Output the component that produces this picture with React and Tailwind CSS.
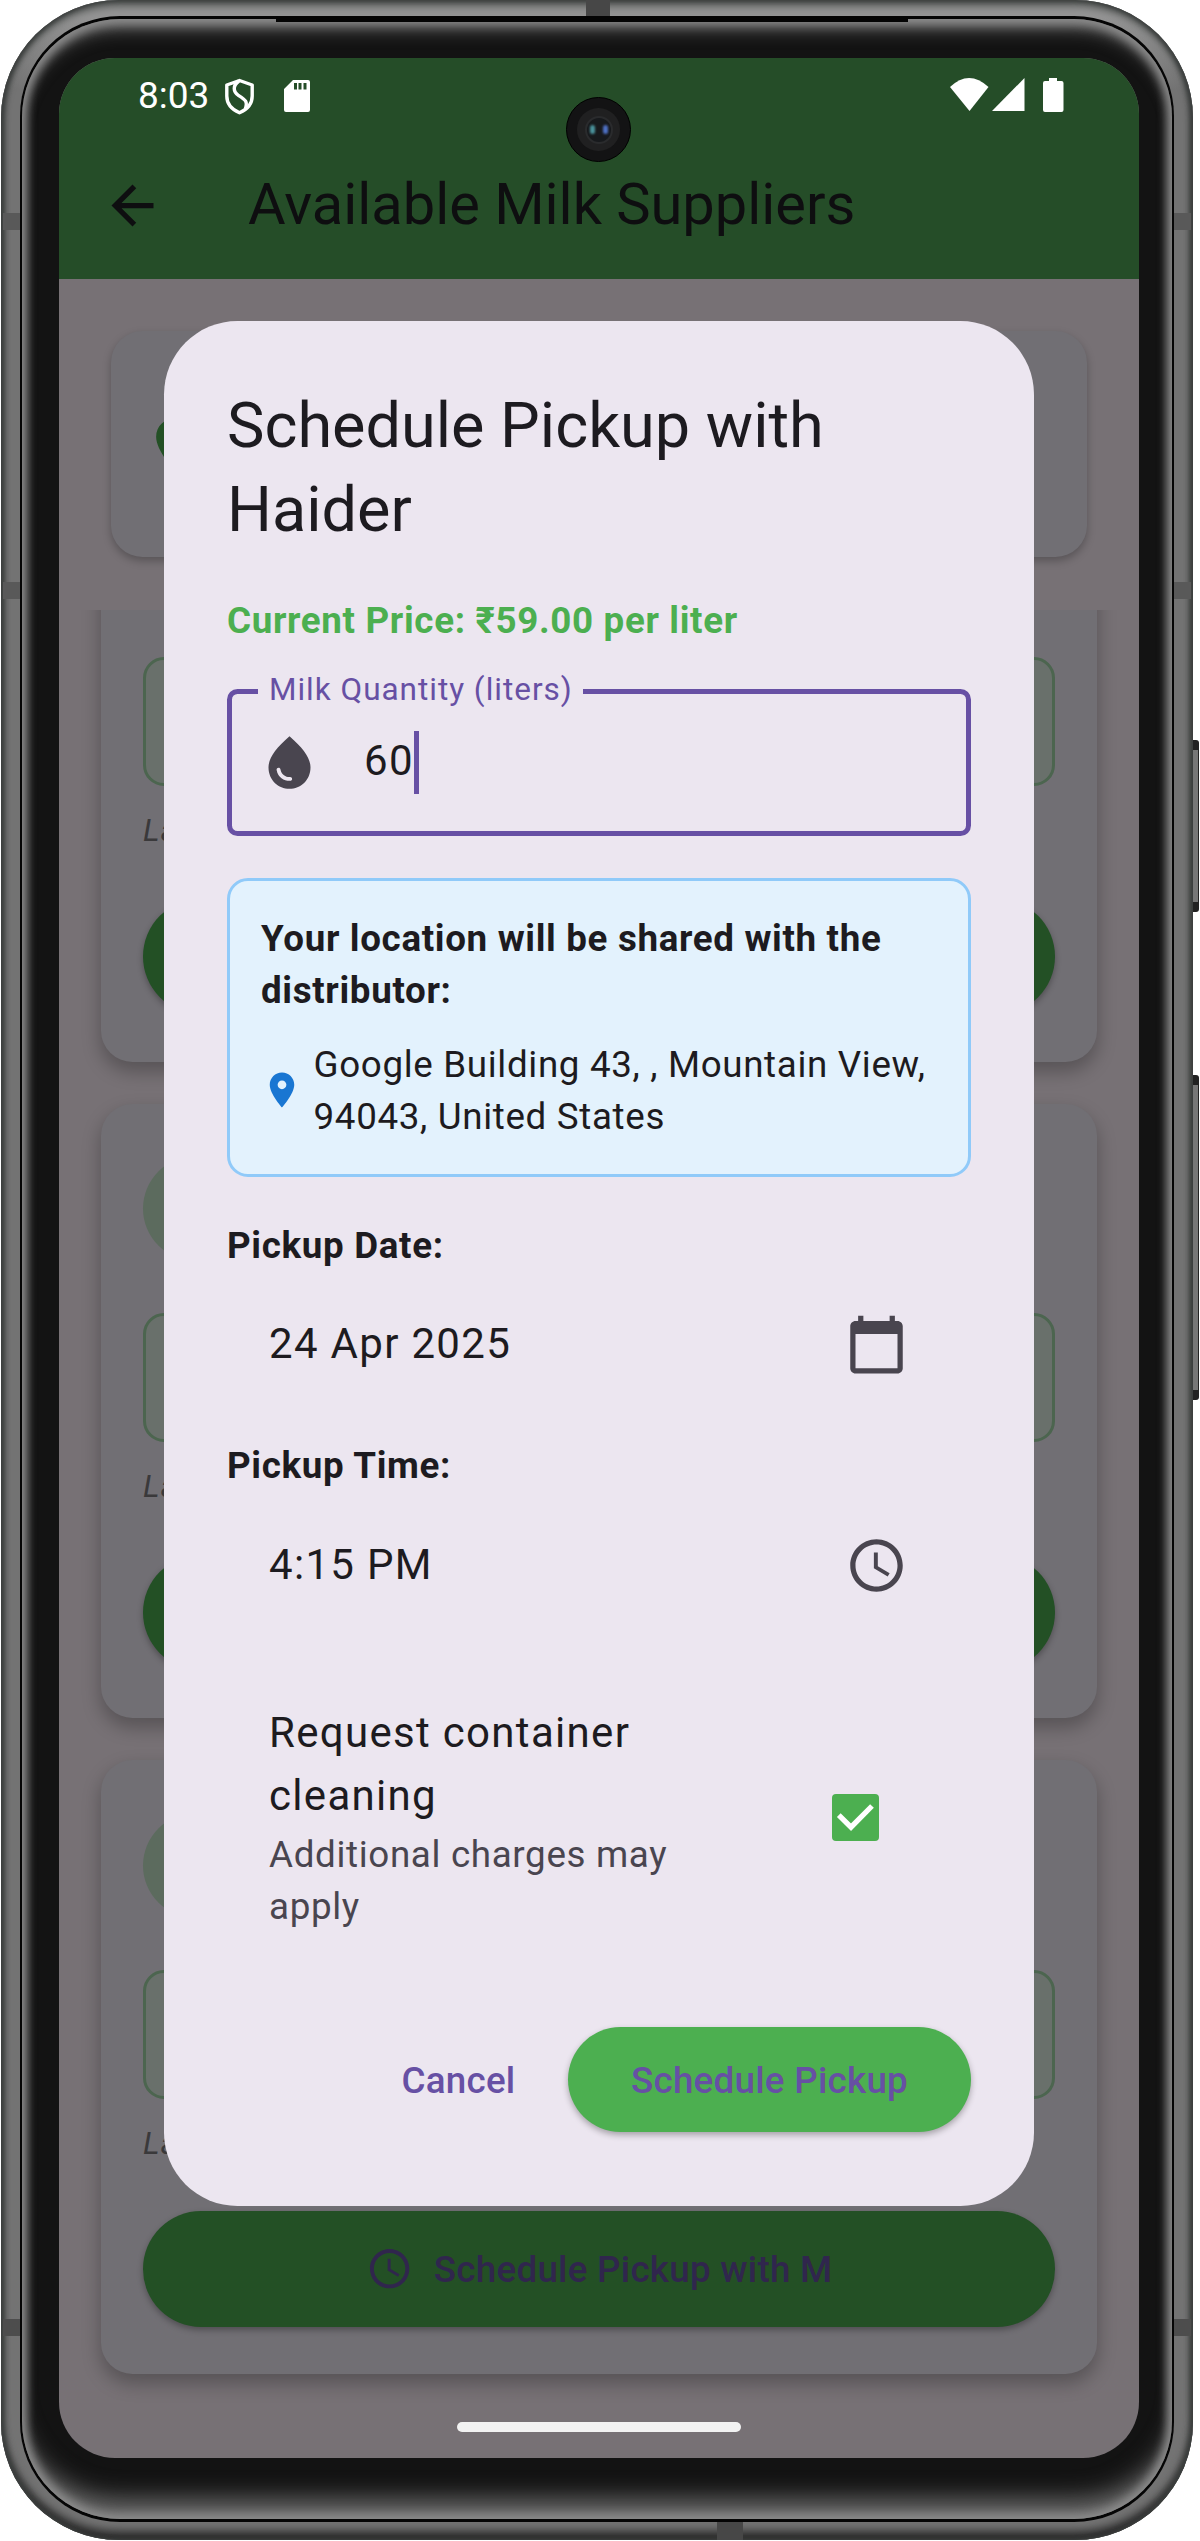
import React from "react";

const icons = {
  back: "M20 11H7.83l5.59-5.59L12 4l-8 8 8 8 1.41-1.41L7.83 13H20v-2z",
  pin: "M12 2C8.13 2 5 5.13 5 9c0 5.25 7 13 7 13s7-7.75 7-13c0-3.87-3.13-7-7-7zm0 9.5c-1.38 0-2.5-1.12-2.5-2.5s1.12-2.5 2.5-2.5 2.5 1.12 2.5 2.5-1.12 2.5-2.5 2.5z",
  calendar:
    "M20 3h-1V1h-2v2H7V1H5v2H4c-1.1 0-2 .9-2 2v16c0 1.1.9 2 2 2h16c1.1 0 2-.9 2-2V5c0-1.1-.9-2-2-2zm0 18H4V8h16v13z",
  clock:
    "M11.99 2C6.47 2 2 6.48 2 12s4.47 10 9.99 10C17.52 22 22 17.52 22 12S17.52 2 11.99 2zM12 20c-4.42 0-8-3.58-8-8s3.58-8 8-8 8 3.58 8 8-3.58 8-8 8zm.5-13H11v6l5.25 3.15.75-1.23-4.5-2.67z",
  drop: "M12 2c-5.33 4.55-8 8.48-8 11.8 0 4.98 3.8 8.2 8 8.2s8-3.22 8-8.2c0-3.32-2.67-7.25-8-11.8zM7.83 14c.37 0 .67.26.74.62.41 2.22 2.28 2.98 3.64 2.87.43-.02.79.32.79.75 0 .4-.32.73-.72.75-2.13.13-4.62-1.09-5.19-4.12-.08-.45.28-.87.74-.87z",
};

function Icon({ name, className }) {
  return (
    <svg viewBox="0 0 24 24" fill="currentColor" className={className}>
      <path d={icons[name]} />
    </svg>
  );
}

function StatusBar() {
  return (
    <div className="flex h-[74px] items-start pl-[79px] pr-[75px] pt-[15px] text-white">
      <span className="mt-[1px] w-[72px] text-[37px] leading-[44px]">8:03</span>
      <svg className="ml-[14px] mt-[5px] h-[37px] w-[31px]" viewBox="0 0 31 37" fill="none" stroke="white" strokeWidth="3.4">
        <path d="M15.500 2.500 28.200 7V18c0 8-5 13.500-12.700 16.800C7.800 31.500 2.800 26 2.800 18V7z" strokeLinejoin="round" />
        <path d="M15 3c-6.500 4.500-6 10.500-.5 14.500 7 4.500 9.500 6 6.800 13.500" />
      </svg>
      <svg className="ml-[29px] mt-[7px] h-[32px] w-[26px]" viewBox="0 0 26 32">
        <path fill="white" fillRule="evenodd" d="M9 0H24a2 2 0 0 1 2 2V30a2 2 0 0 1-2 2H2a2 2 0 0 1-2-2V9zM10 3v6.500h3V3zM14.500 3v6.500h3V3zM19.500 3v6.500h3V3z" />
      </svg>
      <svg className="ml-auto mt-[5px] h-[34px] w-[115px]" viewBox="0 0 115 34" fill="white">
        <path d="M1 9Q20 -9 39.500 9L20.500 33z" />
        <path d="M75.500 0V33H43z" />
        <path d="M100 0h8v3h4.500a2 2 0 0 1 2 2V32a2 2 0 0 1-2 2h-16.500a2 2 0 0 1-2-2V5a2 2 0 0 1 2-2h4z" />
      </svg>
    </div>
  );
}

function SupplierCard({ action }) {
  return (
    <div className="h-[614.25px] shrink-0 rounded-[31.5px] bg-[#716f74] px-[42px] pt-[52.5px] shadow-[0_9px_18px_1px_rgba(0,0,0,0.26)]">
      <div className="h-[105px] w-[105px] rounded-full bg-[#5c6b5e]" />
      <div className="mt-[52px] h-[129px] rounded-[21px] border-[3px] border-[#4c654f] bg-[#69706b]" />
      <div className="mt-[24px] h-[42px] text-[31.5px] italic leading-[42px] tracking-[1px] text-[#3a393b]">La</div>
      <div className="mt-[46.5px] flex h-[115.5px] items-center justify-center gap-[21px] rounded-full bg-[#235025] text-[#30264d] shadow-[0_3px_6px_rgba(0,0,0,0.3)]">
        {action && (
          <>
            <Icon name="clock" className="h-[47.25px] w-[47.25px]" />
            <span className="mt-[2px] text-[36.75px] font-medium leading-[52.5px] tracking-[0.26px]">{action}</span>
          </>
        )}
      </div>
    </div>
  );
}

function PickerRow({ value, icon }) {
  return (
    <div className="flex h-[147px] items-center justify-between pl-[42px] pr-[63px]">
      <span className="-mt-[2px] text-[42px] leading-[63px] tracking-[1.31px]">{value}</span>
      <Icon name={icon} className="h-[63px] w-[63px] text-[#49454f]" />
    </div>
  );
}

function PickupDialog() {
  return (
    <div className="absolute left-[105px] top-[263px] flex h-[1885px] w-[870px] flex-col rounded-[73.5px] bg-[#ece6f0] p-[63px] text-[#1d1b20]">
      <h2 className="text-[63px] leading-[84px]">
        Schedule Pickup with
        <br />
        Haider
      </h2>
      <p className="-mb-[1px] mt-[43px] text-[36.75px] font-bold leading-[52.5px] tracking-[0.66px] text-[#4caf50]">
        Current Price: ₹59.00 per liter
      </p>

      <div className="relative mt-[42px] flex h-[147px] shrink-0 items-center rounded-[10.5px] border-[5.25px] border-[#6750a4]">
        <span className="absolute left-[26px] top-[-25px] w-[325px] bg-[#ece6f0] pl-[11px] text-[31.5px] leading-[42px] tracking-[0.98px] text-[#6750a4]">
          Milk Quantity (liters)
        </span>
        <Icon name="drop" className="ml-[26px] h-[63px] w-[63px] text-[#49454f]" />
        <span className="-mt-[3px] ml-[43px] text-[42px] leading-[63px] tracking-[1.31px]">60</span>
        <span className="h-[63px] w-[5px] bg-[#6750a4]" />
      </div>

      <div className="mt-[42px] h-[299.25px] shrink-0 rounded-[21px] border-[3px] border-[#90caf9] bg-[#e3f2fd] p-[31px]">
        <p className="-mb-[1px] pt-[1px] text-[36.75px] font-bold leading-[52.5px] tracking-[0.66px]">
          Your location will be shared with the
          <br />
          distributor:
        </p>
        <div className="mt-[21px] flex items-center gap-[10.5px]">
          <Icon name="pin" className="h-[42px] w-[42px] shrink-0 text-[#1976d2]" />
          <p className="-mb-[1px] pt-[1px] whitespace-nowrap text-[36.75px] leading-[52.5px] tracking-[0.66px]">
            Google Building 43, , Mountain View,
            <br />
            94043, United States
          </p>
        </div>
      </div>

      <p className="-mb-[1px] mt-[43px] text-[36.75px] font-bold leading-[52.5px] tracking-[0.66px]">Pickup Date:</p>
      <PickerRow value="24 Apr 2025" icon="calendar" />
      <p className="-mb-[1px] mt-[22px] text-[36.75px] font-bold leading-[52.5px] tracking-[0.66px]">Pickup Time:</p>
      <PickerRow value="4:15 PM" icon="clock" />

      <div className="mt-[42px] flex h-[273px] items-center justify-between pl-[42px] pr-[92px]">
        <div>
          <p className="-mt-[1px] mb-[2px] text-[42px] leading-[63px] tracking-[1.31px]">
            Request container
            <br />
            cleaning
          </p>
          <p className="-mb-[1px] text-[36.75px] leading-[52.5px] tracking-[0.66px] text-[#49454f]">
            Additional charges may
            <br />
            apply
          </p>
        </div>
        <div className="flex h-[47px] w-[47px] items-center justify-center rounded-[4px] bg-[#4caf50]">
          <svg viewBox="0 0 47 47" className="h-[47px] w-[47px]" fill="none" stroke="white" strokeWidth="5.250">
            <path d="M6.800 21.200 19 33.200 40 12" />
          </svg>
        </div>
      </div>

      <div className="mt-[63px] flex h-[126px] items-center justify-end gap-[21px] text-[36.75px] font-medium leading-[52.5px] tracking-[0.26px] text-[#6750a4]">
        <button className="px-[31.5px] pt-[2px]">Cancel</button>
        <button className="h-[105px] rounded-full bg-[#4caf50] px-[63px] pt-[2px] shadow-[0_3px_6px_rgba(0,0,0,0.3)]">
          Schedule Pickup
        </button>
      </div>
    </div>
  );
}

function Screen() {
  return (
    <div className="relative flex h-[2400px] w-[1080px] flex-col overflow-hidden rounded-[56px] bg-[#777175]">
      <header className="h-[221px] shrink-0 bg-[#254d28] text-[#0e0e10]">
        <StatusBar />
        <div className="flex h-[147px] items-center pl-[42px]">
          <Icon name="back" className="h-[63px] w-[63px]" />
          <h1 className="-mt-[2px] ml-[84px] whitespace-nowrap text-[57.75px] leading-[73px]">Available Milk Suppliers</h1>
        </div>
      </header>
      <div className="mx-[52px] mt-[52px] flex h-[226px] shrink-0 items-center rounded-[31.5px] bg-[#716f74] pl-[31.5px] text-[#235025] shadow-[0_4px_9px_rgba(0,0,0,0.26)]">
        <Icon name="pin" className="h-[63px] w-[63px]" />
      </div>
      <div className="mt-[53px] min-h-0 flex-1 overflow-hidden">
        <div className="-mt-[162.5px] flex flex-col gap-[42px] px-[42px]">
          <SupplierCard />
          <SupplierCard />
          <SupplierCard action="Schedule Pickup with M" />
        </div>
      </div>
      <PickupDialog />
      <div className="absolute bottom-[26px] left-[398px] h-[10px] w-[284px] rounded-full bg-[#f2f2f2]" />
      <div className="absolute left-[507px] top-[39px] flex h-[65px] w-[65px] items-center justify-center rounded-full border border-black bg-[#131314]">
        <div className="flex h-[43px] w-[43px] items-center justify-center rounded-full bg-[#202021]">
          <div className="flex h-[28px] w-[28px] items-center justify-between rounded-full border-2 border-[#2a2b2d] bg-[#17191c] px-[3px]">
            <div className="h-[9px] w-[5px] rounded-full bg-[#4a929c] blur-[1px]" />
            <div className="h-[9px] w-[5px] rounded-full bg-[#4e70c4] blur-[1px]" />
          </div>
        </div>
      </div>
    </div>
  );
}

export default function App() {
  return (
    <div className="relative h-[2541px] w-[1200px] overflow-hidden bg-white pl-[1px] font-[Roboto,sans-serif]">
      {/* side buttons */}
      <div className="absolute left-[1190px] top-[740px] h-[172px] w-[9px] rounded-r-[3px] border-y-[10px] border-r border-[#222] bg-[#777]" />
      <div className="absolute left-[1190px] top-[1075px] h-[325px] w-[9px] rounded-r-[3px] border-y-[10px] border-r border-[#222] bg-[#777]" />

      {/* metal rim */}
      <div className="relative h-[2540px] w-[1192px] overflow-hidden rounded-[118px] bg-[linear-gradient(#949494_0,#949494_17px,#737373_90px)] px-[19px] pb-[18px] pt-[16px] shadow-[inset_3px_0_4px_#3c3f3e,inset_-3px_0_4px_#3c3f3e,inset_0_5px_9px_#444846,inset_0_-9px_9px_#2c2c2c]">
        <div className="absolute left-[2px] top-[213px] h-[17px] w-[1188px] bg-[#595959]" />
        <div className="absolute left-[2px] top-[582px] h-[17px] w-[1188px] bg-[#595959]" />
        <div className="absolute left-[2px] top-[2319px] h-[17px] w-[1188px] bg-[#4d4d4d]" />
        <div className="absolute left-[585px] top-0 h-[18px] w-[24px] bg-[#474747]" />
        <div className="absolute bottom-0 left-[716px] h-[20px] w-[26px] bg-[#474747]" />

        {/* seam between rim and glass */}
        <div className="relative h-full w-full rounded-[100px] bg-[#050505] px-[2px] pb-[3px] pt-[3px]">
          <div className="relative h-full w-full rounded-[98px] bg-[#131313] pl-[37px] pt-[39px] shadow-[inset_0_0_10px_5px_#8c8c8c,inset_0_17px_18px_-8px_#707070,inset_0_-32px_24px_-12px_#6c6c6c]">
            <div className="absolute left-[254px] top-0 h-[3px] w-[632px] bg-[#050505]" />
            <Screen />
          </div>
        </div>
      </div>
    </div>
  );
}
